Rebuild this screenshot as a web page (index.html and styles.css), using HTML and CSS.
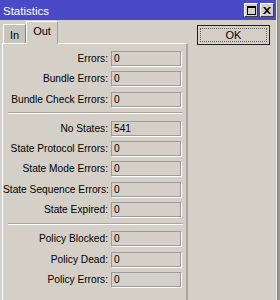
FILE: index.html
```html
<!DOCTYPE html>
<html lang="en">
<head>
    <meta charset="UTF-8">
    <title>Statistics</title>
    <link rel="stylesheet" href="styles.css">
</head>
<body>

    <div class="window">
        <div class="titlebar">
            <span class="title">Statistics</span>
            <div class="title-buttons">
                <span class="tb-btn">
                    <svg width="9" height="9" viewBox="0 0 9 9"><rect x="0.5" y="0.5" width="8" height="8" fill="none" stroke="#000"/><rect x="0" y="0" width="9" height="2" fill="#000"/></svg>
                </span>
                <span class="tb-btn">
                    <svg width="8" height="7" viewBox="0 0 8 7"><path d="M0 0h2l2 2.2L6 0h2L5 3.5 8 7H6L4 4.8 2 7H0l3-3.5z" fill="#000"/></svg>
                </span>
            </div>
        </div>

        <div class="content">
            <div class="tabs-area">
                <div class="tabs">
                    <div class="tab">In</div>
                    <div class="tab active">Out</div>
                </div>
                <div class="panel">
                    <div class="row"><label>Errors:</label><div class="field">0</div></div>
                    <div class="row"><label>Bundle Errors:</label><div class="field">0</div></div>
                    <div class="row"><label>Bundle Check Errors:</label><div class="field">0</div></div>
                    <div class="sep"></div>
                    <div class="row"><label>No States:</label><div class="field">541</div></div>
                    <div class="row"><label>State Protocol Errors:</label><div class="field">0</div></div>
                    <div class="row"><label>State Mode Errors:</label><div class="field">0</div></div>
                    <div class="row"><label>State Sequence Errors:</label><div class="field">0</div></div>
                    <div class="row"><label>State Expired:</label><div class="field">0</div></div>
                    <div class="sep"></div>
                    <div class="row"><label>Policy Blocked:</label><div class="field">0</div></div>
                    <div class="row"><label>Policy Dead:</label><div class="field">0</div></div>
                    <div class="row"><label>Policy Errors:</label><div class="field">0</div></div>
                </div>
            </div>

            <div class="side">
                <button class="ok-btn"><span>OK</span></button>
            </div>
        </div>
    </div>

</body>
</html>
```

FILE: styles.css
```css
body {
    margin: 0;
    font-family: 'Liberation Sans', Arial, sans-serif;
    font-size: 10.2px;
    color: #000;
    background: #d4d0c8;
}

.window {
    width: 276px;
    height: 300px;
    background: #d4d0c8;
    border-right: 1px solid #f0eee8;
    box-shadow: 1px 0 0 #808080, 3px 0 0 #9a9890;
    overflow: hidden;
}

/* Title bar */
.titlebar {
    height: 20px;
    background: #4a4ac8;
    display: flex;
    align-items: center;
    justify-content: space-between;
    padding-left: 3px;
}

.title {
    color: #fff;
    font-size: 11.5px;
    margin-top: 1px;
}

.title-buttons {
    display: flex;
    gap: 2px;
    margin-right: 2px;
}

.tb-btn {
    width: 14px;
    height: 14px;
    background: #d4d0c8;
    border: 1px solid #404040;
    border-top-color: #fff;
    border-left-color: #fff;
    box-sizing: border-box;
    display: flex;
    align-items: center;
    justify-content: center;
}

.content {
    display: flex;
}

/* Tabs */
.tabs-area {
    width: 186px;
    margin-left: 2px;
}

.tabs {
    display: flex;
    align-items: flex-end;
    height: 23px;
    margin-left: 1px;
}

.tab {
    height: 18px;
    padding: 0 6px;
    background: #c8c4bc;
    border: 1px solid #fff;
    border-bottom: none;
    border-right-color: #808080;
    line-height: 20px;
    font-size: 11px;
}

.tab.active {
    height: 22px;
    padding: 0 6px;
    background: #d4d0c8;
    line-height: 18px;
    border-right: 1px solid #a0a0a0;
    margin-bottom: -1px;
    position: relative;
}

.panel {
    border-top: 1px solid #fff;
    border-left: 1px solid #fff;
    border-right: 2px solid #a8a59e;
    padding-top: 7px;
    height: 260px;
}

.row {
    display: grid;
    grid-template-columns: 105px 70px;
    column-gap: 3px;
    height: 15px;
    margin-bottom: 5.4px;
    align-items: center;
}

.row label {
    text-align: right;
    white-space: nowrap;
}

.field {
    height: 15px;
    box-sizing: border-box;
    border: 1px solid #9a9a9a;
    box-shadow: 1px 1px 0 #fff;
    padding-left: 2px;
    line-height: 13px;
}

.sep {
    height: 1px;
    margin: 0 3px 6.5px 5px;
    background: #a8a59e;
    border-bottom: 1px solid #fff;
}

/* OK button */
.side {
    flex: 1;
    padding: 5px 0 0 9px;
}

.ok-btn {
    width: 73px;
    height: 20px;
    background: #d4d0c8;
    border: 1px solid #202020;
    padding: 2px;
    font-family: inherit;
    font-size: 11px;
}

.ok-btn span {
    display: block;
    height: 100%;
    box-sizing: border-box;
    border: 1px dotted #606060;
    line-height: 12px;
}
```
